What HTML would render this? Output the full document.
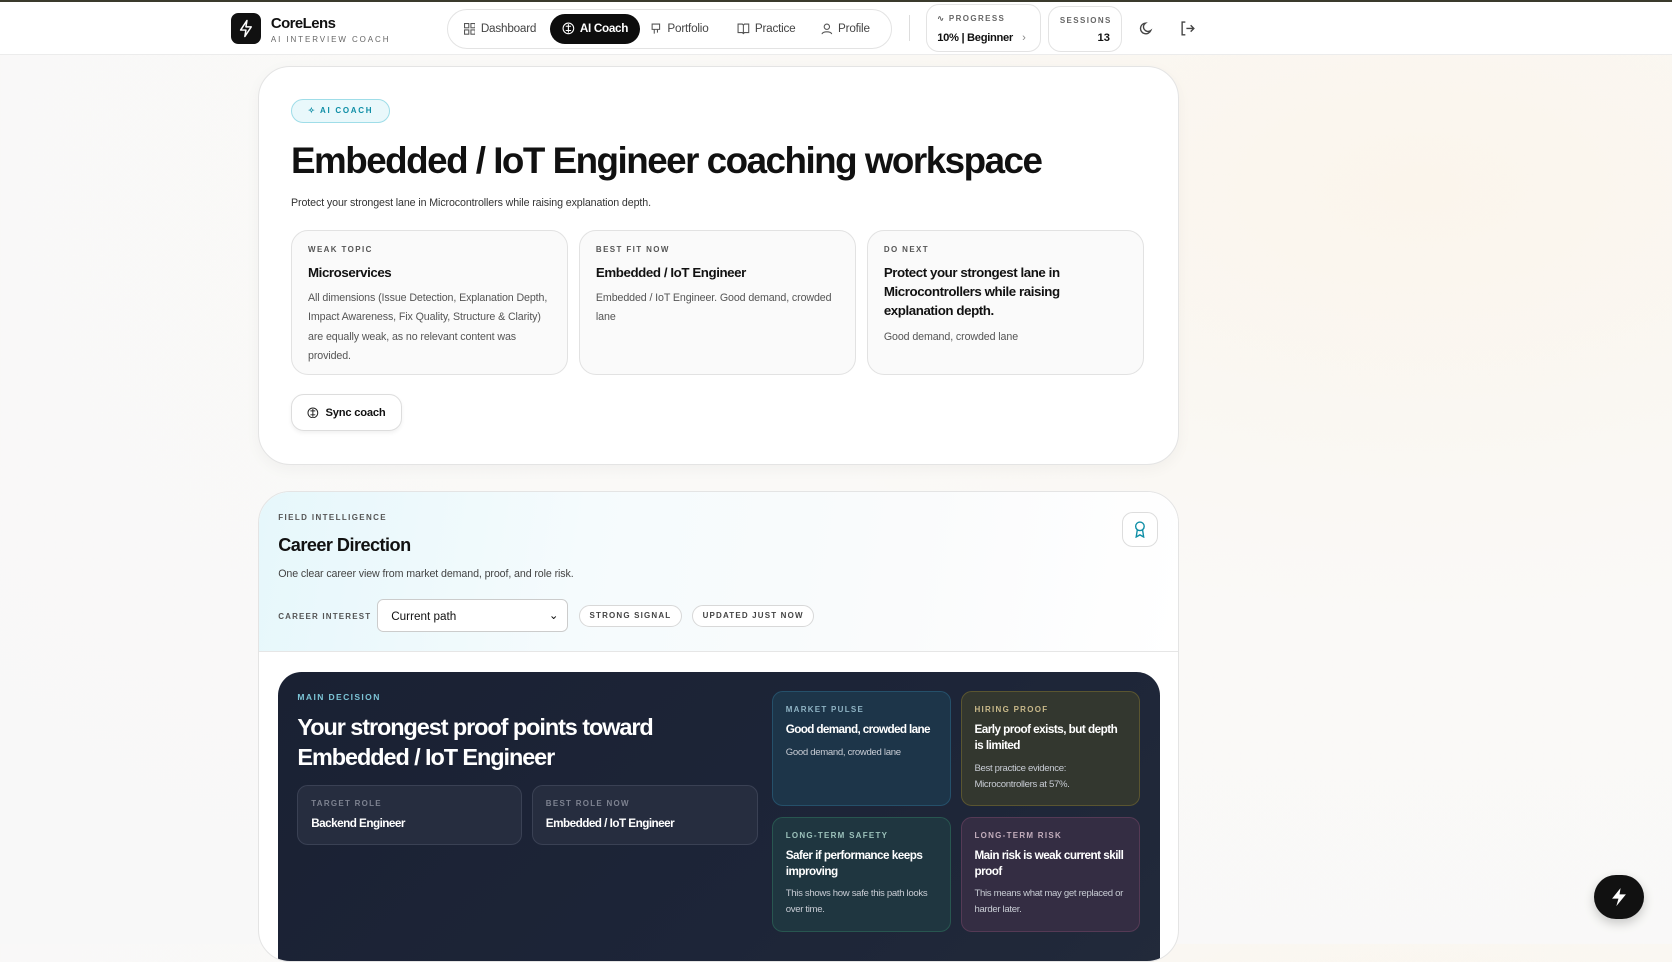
<!DOCTYPE html>
<html><head><meta charset="utf-8"><style>
html,body{margin:0;padding:0}
body{width:1568px;height:885px;overflow:hidden;zoom:1.06633;font-family:"Liberation Sans",sans-serif;color:#111;background:radial-gradient(ellipse at 85% 20%,#fbf5ec 0%,#faf9f7 40%,#f8f8f8 100%);position:relative}
.abs{position:absolute}
.topline{left:0;top:0;width:1568px;height:2px;background:#3a3a2c}
.header{left:0;top:2px;width:1568px;height:49px;background:#fff;border-bottom:1px solid #ececec}
.logo{left:217px;top:12px;width:28px;height:29px;background:#111;border-radius:7px}
.nav{left:419px;top:8px;width:416px;height:36px;border:1px solid #e3e3e3;border-radius:19px;background:#fff}
.ni{position:absolute;top:12px;font-size:11px;color:#444;display:flex;align-items:center;gap:5px;letter-spacing:-.2px}
.act{left:96px;top:4px;width:84px;height:28px;background:#0d0d0d;border-radius:14px;color:#fff;font-weight:bold;font-size:11px;display:flex;align-items:center;justify-content:center;gap:5px;position:absolute;letter-spacing:-.3px}
.pc{background:#fff;border:1px solid #e3e3e3;border-radius:12px}
.lbl{font-size:7.5px;letter-spacing:1.3px;font-weight:bold;color:#555}
.card{left:242px;top:62px;width:862px;height:372px;background:#fff;border:1px solid #e4e4e4;border-radius:30px;box-shadow:0 4px 14px rgba(0,0,0,.04)}
.sc{position:absolute;top:153px;width:260px;height:136px;border:1px solid #e2e2e2;border-radius:16px;background:#fafafa;box-sizing:border-box;padding:13px 15px}
.sc .t{font-size:12.5px;font-weight:bold;margin-top:8px;line-height:18px;letter-spacing:-.4px}
.sc .d{font-size:10px;color:#555;margin-top:7px;line-height:18px;letter-spacing:-.1px}
.card2{left:242px;top:460px;width:862px;height:440px;background:#fff;border:1px solid #e4e4e4;border-radius:30px;overflow:hidden}
.dark{left:18px;top:169px;width:827px;height:300px;background:linear-gradient(135deg,#1a2133,#1d2538 60%,#222a3a);border-radius:22px}
.tile{position:absolute;border-radius:10px;box-sizing:border-box;padding:12px 12px;color:#fff}
.tile .l{font-size:7.5px;letter-spacing:1.2px;font-weight:bold}
.tile .h{font-size:11px;font-weight:bold;margin-top:8px;line-height:15px;letter-spacing:-.5px}
.tile .p{font-size:9px;color:#c8ccd4;margin-top:6px;line-height:15px;letter-spacing:-.3px}
.pill{position:absolute;top:106px;height:21px;border:1px solid #d8d8d8;border-radius:11px;background:#fff;font-size:7.5px;letter-spacing:1.1px;font-weight:bold;color:#444;display:flex;align-items:center;padding:0 9px;box-sizing:border-box}
</style></head><body>
<div class="abs topline"></div>
<div class="abs header"></div>
<div class="abs logo"><svg width="28" height="29" viewBox="0 0 28 29"><path d="M15 7 9 16h5l-1 6 6-9h-5z" fill="none" stroke="#fff" stroke-width="1.4" stroke-linejoin="round"/></svg></div>
<div class="abs" style="left:254px;top:14px;font-size:14px;font-weight:bold;letter-spacing:-.5px">CoreLens</div>
<div class="abs" style="left:254px;top:33px;font-size:7.5px;letter-spacing:1.8px;color:#666">AI INTERVIEW COACH</div>
<div class="abs nav">
 <div class="ni" style="left:15px"><svg width="11" height="11" viewBox="0 0 11 11" fill="none" stroke="#555"><rect x=".5" y=".5" width="4" height="4"/><rect x="6.5" y=".5" width="4" height="4"/><rect x=".5" y="6.5" width="4" height="4"/><rect x="6.5" y="6.5" width="4" height="4"/></svg>Dashboard</div>
 <div class="act"><svg width="12" height="12" viewBox="0 0 12 12" fill="none" stroke="#fff"><circle cx="6" cy="6" r="5"/><path d="M6 2v8M3.5 4h5M3.5 8h5"/></svg>AI Coach</div>
 <div class="ni" style="left:190px"><svg width="11" height="11" viewBox="0 0 11 11" fill="none" stroke="#555"><path d="M2 1h7v5H2zM4 6v4M7 6v3"/></svg>Portfolio</div>
 <div class="ni" style="left:271px"><svg width="12" height="11" viewBox="0 0 12 11" fill="none" stroke="#555"><path d="M1 1h4l1 1 1-1h4v8H7l-1 1-1-1H1zM6 2v8"/></svg>Practice</div>
 <div class="ni" style="left:350px"><svg width="11" height="11" viewBox="0 0 11 11" fill="none" stroke="#555"><circle cx="5.5" cy="3.5" r="2.5"/><path d="M1 10.5c0-3 9-3 9 0"/></svg>Profile</div>
</div>
<div class="abs" style="left:852px;top:14px;width:1px;height:24px;background:#ddd"></div>
<div class="abs pc" style="left:868px;top:4px;width:106px;height:43px">
 <div class="lbl abs" style="left:10px;top:8px;color:#666">∿ PROGRESS</div>
 <div class="abs" style="left:10px;top:25px;font-size:10.5px;font-weight:bold;letter-spacing:-.3px">10% | Beginner <span style="color:#888;font-weight:normal;margin-left:6px">›</span></div>
</div>
<div class="abs pc" style="left:983px;top:6px;width:67px;height:41px">
 <div class="lbl abs" style="left:10px;top:8px;color:#666">SESSIONS</div>
 <div class="abs" style="right:10px;top:23px;font-size:10.5px;font-weight:bold">13</div>
</div>
<svg class="abs" style="left:1068px;top:20px" width="14" height="14" viewBox="0 0 14 14" fill="none" stroke="#444" stroke-width="1.3"><path d="M11 9A5 5 0 1 1 6 2a4 4 0 0 0 5 7z"/></svg>
<svg class="abs" style="left:1107px;top:20px" width="14" height="14" viewBox="0 0 14 14" fill="none" stroke="#444" stroke-width="1.3"><path d="M5 1H2v12h3M6 7h7M10 4l3 3-3 3"/></svg>

<div class="abs card">
 <div class="abs" style="left:30px;top:30px;width:93px;height:22px;border:1px solid #9fdde8;background:#e9f8fb;border-radius:12px;box-sizing:border-box;font-size:7.5px;letter-spacing:1.6px;font-weight:bold;color:#0e8ea6;display:flex;align-items:center;justify-content:center;gap:5px">✧ AI COACH</div>
 <div class="abs" style="left:30px;top:68px;font-size:34.5px;font-weight:bold;letter-spacing:-1.4px;white-space:nowrap">Embedded / IoT Engineer coaching workspace</div>
 <div class="abs" style="left:30px;top:122px;font-size:10px;color:#333;letter-spacing:-.1px">Protect your strongest lane in Microcontrollers while raising explanation depth.</div>
 <div class="sc" style="left:30px"><div class="lbl">WEAK TOPIC</div><div class="t">Microservices</div><div class="d">All dimensions (Issue Detection, Explanation Depth, Impact Awareness, Fix Quality, Structure &amp; Clarity) are equally weak, as no relevant content was provided.</div></div>
 <div class="sc" style="left:300px"><div class="lbl">BEST FIT NOW</div><div class="t">Embedded / IoT Engineer</div><div class="d">Embedded / IoT Engineer. Good demand, crowded lane</div></div>
 <div class="sc" style="left:570px"><div class="lbl">DO NEXT</div><div class="t">Protect your strongest lane in Microcontrollers while raising explanation depth.</div><div class="d">Good demand, crowded lane</div></div>
 <div class="abs" style="left:30px;top:307px;width:104px;height:34px;border:1px solid #ddd;border-radius:12px;box-sizing:border-box;box-shadow:0 2px 4px rgba(0,0,0,.06);font-size:10.5px;font-weight:bold;display:flex;align-items:center;justify-content:center;gap:6px;letter-spacing:-.2px"><svg width="11" height="11" viewBox="0 0 12 12" fill="none" stroke="#222"><circle cx="6" cy="6" r="5"/><path d="M6 2v8M3.5 4h5M3.5 8h5"/></svg>Sync coach</div>
</div>

<div class="abs card2">
 <div class="abs" style="left:0;top:0;width:862px;height:150px;background:linear-gradient(100deg,#e6f7fb 0%,#f5fbfd 35%,#fafbfc 70%,#fff 100%);border-bottom:1px solid #e6e6e6"></div>
 <div class="lbl abs" style="left:18px;top:20px">FIELD INTELLIGENCE</div>
 <div class="abs" style="left:18px;top:41px;font-size:17px;font-weight:bold;letter-spacing:-.5px">Career Direction</div>
 <div class="abs" style="left:18px;top:72px;font-size:10px;color:#444;letter-spacing:-.1px">One clear career view from market demand, proof, and role risk.</div>
 <div class="lbl abs" style="left:18px;top:113px;letter-spacing:1.1px">CAREER INTEREST</div>
 <div class="abs" style="left:111px;top:101px;width:179px;height:31px;border:1px solid #ccc;border-radius:6px;background:#fff;box-sizing:border-box;font-size:11px;padding:9px 12px">Current path<span style="position:absolute;right:8px;top:7px;font-size:11px">⌄</span></div>
 <div class="pill" style="left:300px">STRONG SIGNAL</div>
 <div class="pill" style="left:406px">UPDATED JUST NOW</div>
 <div class="abs" style="left:809px;top:19px;width:34px;height:33px;border:1px solid #ddd;border-radius:10px;background:#fff;box-sizing:border-box"><svg style="margin:8px 10px" width="13" height="16" viewBox="0 0 13 16" fill="none" stroke="#0e8ea6" stroke-width="1.3"><circle cx="6.5" cy="5" r="4"/><path d="M4 8.5 3 15l3.5-2 3.5 2-1-6.5"/></svg></div>
 <div class="abs dark">
  <div class="abs" style="left:18px;top:19px;font-size:8px;letter-spacing:1.3px;font-weight:bold;color:#7cc4d6">MAIN DECISION</div>
  <div class="abs" style="left:18px;top:39px;font-size:22px;font-weight:bold;color:#fff;line-height:28px;letter-spacing:-1px">Your strongest proof points toward<br>Embedded / IoT Engineer</div>
  <div class="tile" style="left:18px;top:106px;width:211px;height:57px;background:#262d3f;border:1px solid #3a4154"><div class="l" style="color:#7d8290">TARGET ROLE</div><div class="h">Backend Engineer</div></div>
  <div class="tile" style="left:238px;top:106px;width:212px;height:57px;background:#262d3f;border:1px solid #3a4154"><div class="l" style="color:#7d8290">BEST ROLE NOW</div><div class="h">Embedded / IoT Engineer</div></div>
  <div class="tile" style="left:463px;top:18px;width:168px;height:108px;background:#1d3549;border:1px solid #25506a"><div class="l" style="color:#8fb3c4">MARKET PULSE</div><div class="h" style="white-space:nowrap;letter-spacing:-.6px">Good demand, crowded lane</div><div class="p">Good demand, crowded lane</div></div>
  <div class="tile" style="left:640px;top:18px;width:168px;height:108px;background:#33372f;border:1px solid #5a5530"><div class="l" style="color:#c9b98a">HIRING PROOF</div><div class="h">Early proof exists, but depth is limited</div><div class="p">Best practice evidence: Microcontrollers at 57%.</div></div>
  <div class="tile" style="left:463px;top:136px;width:168px;height:108px;background:#1f3640;border:1px solid #285650"><div class="l" style="color:#9cc2bb">LONG-TERM SAFETY</div><div class="h">Safer if performance keeps improving</div><div class="p">This shows how safe this path looks over time.</div></div>
  <div class="tile" style="left:640px;top:136px;width:168px;height:108px;background:#342d43;border:1px solid #553a55"><div class="l" style="color:#c4aebd">LONG-TERM RISK</div><div class="h">Main risk is weak current skill proof</div><div class="p">This means what may get replaced or harder later.</div></div>
 </div>
</div>
<div class="abs" style="left:1495px;top:821px;width:47px;height:41px;border-radius:21px;background:#111;box-shadow:0 4px 10px rgba(0,0,0,.2)"><svg style="margin:12px 16px" width="15" height="17" viewBox="0 0 15 17"><path d="M9 0 1 10h6l-2 7 9-11H8z" fill="#fff"/></svg></div>
</body></html>
